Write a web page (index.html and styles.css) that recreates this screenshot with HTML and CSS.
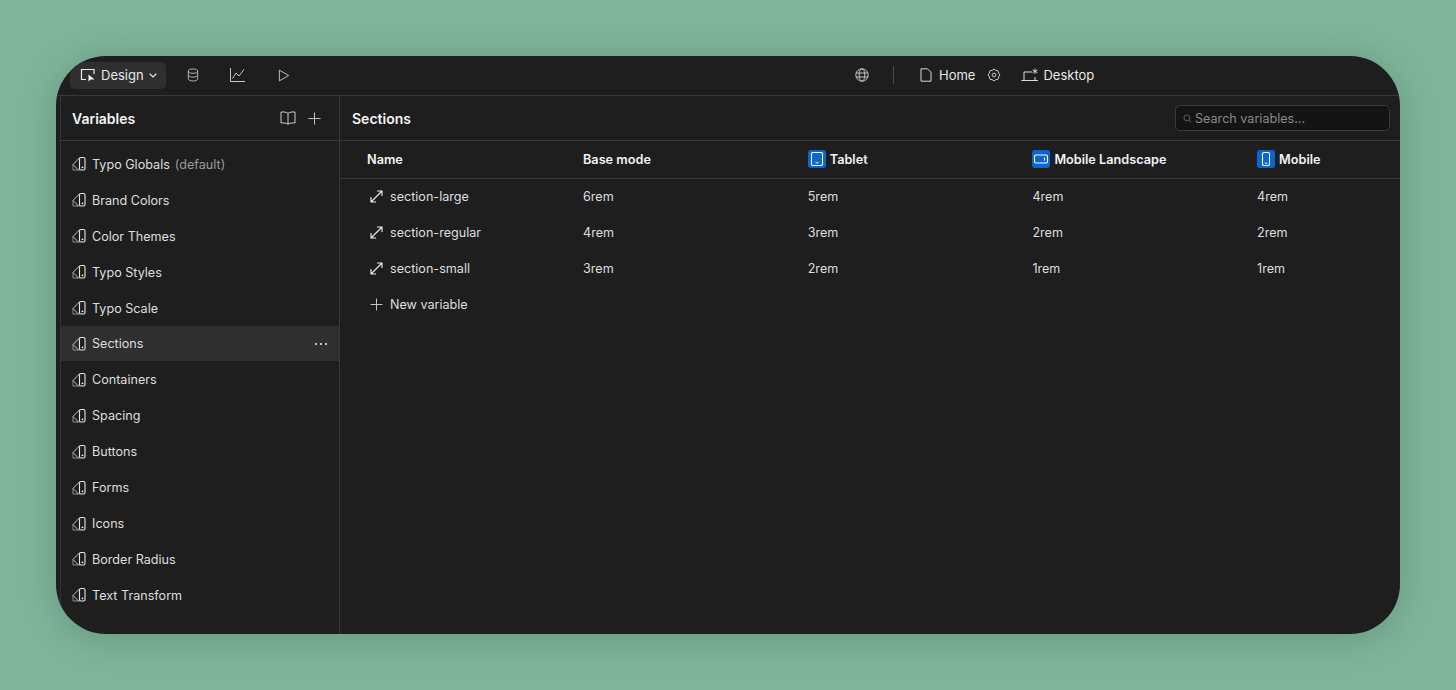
FILE: index.html
```html
<!DOCTYPE html>
<html lang="en">
<head>
<meta charset="utf-8">
<title>Variables</title>
<link rel="stylesheet" href="styles.css">
</head>
<body>
<svg class="defs" width="0" height="0" aria-hidden="true">
  <symbol id="coll" viewBox="0 0 16 16">
    <path d="M1 8.500V14H8" fill="none" stroke="#8c8c8c" stroke-width="1"/>
    <path d="M1 8.500 7.500 1.800M1 8.500 6.500 14" fill="none" stroke="#c4c4c4" stroke-width="1"/>
    <rect x="7.500" y="1.500" width="5.500" height="12.500" rx="1.500" fill="#1e1e1e" stroke="#e6e6e6" stroke-width="1.100"/>
    <circle cx="10.500" cy="11.300" r=".9" fill="#f4f4f4"/>
  </symbol>
  <symbol id="resize" viewBox="0 0 13 13">
    <path d="M1.500 11.500 11.500 1.500M7 1H12V6M1 7V12H6" fill="none" stroke="#f0f0f0" stroke-width="1.100"/>
  </symbol>
  <symbol id="plus" viewBox="0 0 14 14">
    <path d="M7 .5V13.500M.5 7H13.500" fill="none" stroke="currentColor" stroke-width="1"/>
  </symbol>
</svg>
<main class="app">
  <header class="topbar">
    <div class="top-left">
      <button class="mode">
        <svg class="ic16" viewBox="0 0 16 16"><path d="M6 12.500H1.500V2.500H14V7" fill="none" stroke="#eee" stroke-width="1.200"/><path d="M8.500 7.500V14.500L10.500 12.600H14.500Z" fill="#fff"/></svg>
        <span>Design</span>
        <svg class="chev" viewBox="0 0 8 5"><path d="M.7.800 4 4 7.300.800" fill="none" stroke="#e4e4e4" stroke-width="1.200"/></svg>
      </button>
      <svg class="tool db" viewBox="0 0 14 16"><ellipse cx="7" cy="3.500" rx="5.500" ry="2.500" fill="none" stroke="#c8c8c8"/><path d="M1.500 3.500V12.500C1.500 14 4 15 7 15S12.500 14 12.500 12.500V3.500M1.500 8C1.500 9.500 4 10.500 7 10.500S12.500 9.500 12.500 8" fill="none" stroke="#c8c8c8"/></svg>
      <svg class="tool chart" viewBox="0 0 15 14"><path d="M.5 0V13.500H15M2.500 10.500 6 5 9 8 14 1.500" fill="none" stroke="#c8c8c8"/></svg>
      <svg class="tool play" viewBox="0 0 12 14"><path d="M1 1.200V12.800L11 7Z" fill="none" stroke="#c8c8c8" stroke-linejoin="round"/></svg>
    </div>
    <div class="top-center">
      <svg class="globe" viewBox="0 0 14 14"><circle cx="7" cy="7" r="6.200" fill="none" stroke="#c8c8c8"/><ellipse cx="7" cy="7" rx="2.800" ry="6.200" fill="none" stroke="#c8c8c8"/><path d="M1 5H13M1 9H13" stroke="#c8c8c8" fill="none"/></svg>
      <span class="vsep"></span>
      <svg class="page" viewBox="0 0 12 14"><path d="M1 .800H7.500L11 4.300V13.200H1Z" fill="none" stroke="#d8d8d8"/></svg>
      <span class="top-text home">Home</span>
      <svg class="gear" viewBox="0 0 14 14"><path d="M8.800 2.660A1.850 1.850 0 0 1 11.340 5.200 1.850 1.850 0 0 1 11.340 8.800 1.850 1.850 0 0 1 8.800 11.340 1.850 1.850 0 0 1 5.200 11.340 1.850 1.850 0 0 1 2.660 8.800 1.850 1.850 0 0 1 2.660 5.200 1.850 1.850 0 0 1 5.200 2.660 1.850 1.850 0 0 1 8.800 2.660Z" fill="none" stroke="#c8c8c8"/><circle cx="7" cy="7" r="1.900" fill="none" stroke="#c8c8c8"/></svg>
      <svg class="desk" viewBox="0 0 18 14"><path d="M3 12V4H11M14 9V12M.5 12.500H17" fill="none" stroke="#ddd"/><path d="M14 .5V6M11.600 1.900 16.400 4.600M16.400 1.900 11.600 4.600" fill="none" stroke="#ddd" stroke-width=".9"/></svg>
      <span class="top-text">Desktop</span>
    </div>
  </header>
  <div class="body">
    <aside class="sidebar">
      <div class="side-head">
        <h2>Variables</h2>
        <svg class="book" viewBox="0 0 16 14"><path d="M8 2.500C6.500 1.200 4 .8 1 1V12C4 11.800 6.500 12 8 13.300 9.500 12 12 11.800 15 12V1C12 .8 9.500 1.200 8 2.500ZM8 2.500V13.300" fill="none" stroke="#cfcfcf"/></svg>
        <svg class="add"><use href="#plus"/></svg>
      </div>
      <ul class="list">
        <li><svg class="coll"><use href="#coll"/></svg>Typo Globals<span class="muted">(default)</span></li>
        <li><svg class="coll"><use href="#coll"/></svg>Brand Colors</li>
        <li><svg class="coll"><use href="#coll"/></svg>Color Themes</li>
        <li><svg class="coll"><use href="#coll"/></svg>Typo Styles</li>
        <li><svg class="coll"><use href="#coll"/></svg>Typo Scale</li>
        <li class="active"><svg class="coll"><use href="#coll"/></svg>Sections<span class="dots"><i></i><i></i><i></i></span></li>
        <li><svg class="coll"><use href="#coll"/></svg>Containers</li>
        <li><svg class="coll"><use href="#coll"/></svg>Spacing</li>
        <li><svg class="coll"><use href="#coll"/></svg>Buttons</li>
        <li><svg class="coll"><use href="#coll"/></svg>Forms</li>
        <li><svg class="coll"><use href="#coll"/></svg>Icons</li>
        <li><svg class="coll"><use href="#coll"/></svg>Border Radius</li>
        <li><svg class="coll"><use href="#coll"/></svg>Text Transform</li>
      </ul>
    </aside>
    <section class="content">
      <div class="content-head">
        <h2>Sections</h2>
        <label class="search">
          <svg class="lens" viewBox="0 0 10 10"><circle cx="4.300" cy="4.300" r="3.300" fill="none" stroke="#666"/><path d="M6.800 6.800 9.300 9.300" stroke="#666" fill="none"/></svg>
          <span>Search variables...</span>
        </label>
      </div>
      <div class="grid head">
        <div class="name-h">Name</div>
        <div>Base mode</div>
        <div class="bp"><span class="badge"><svg viewBox="0 0 18 18"><rect x="3.500" y="2.500" width="11" height="13" rx="1.200" fill="none" stroke="#fff" stroke-width="1.100"/><path d="M7.500 12.800H10.500" stroke="#fff"/></svg></span>Tablet</div>
        <div class="bp"><span class="badge"><svg viewBox="0 0 18 18"><rect x="2.500" y="5" width="13" height="8" rx="1.500" fill="none" stroke="#fff" stroke-width="1.100"/><path d="M12.500 7.500V10.500" stroke="#fff"/></svg></span>Mobile Landscape</div>
        <div class="bp"><span class="badge"><svg viewBox="0 0 18 18"><rect x="5.500" y="2.500" width="7" height="13" rx="1.500" fill="none" stroke="#fff" stroke-width="1.100"/><path d="M7.800 13.200H10.200" stroke="#fff"/></svg></span>Mobile</div>
      </div>
      <div class="grid row">
        <div class="var"><svg class="rz"><use href="#resize"/></svg>section-large</div><div>6rem</div><div>5rem</div><div>4rem</div><div>4rem</div>
      </div>
      <div class="grid row">
        <div class="var"><svg class="rz"><use href="#resize"/></svg>section-regular</div><div>4rem</div><div>3rem</div><div>2rem</div><div>2rem</div>
      </div>
      <div class="grid row">
        <div class="var"><svg class="rz"><use href="#resize"/></svg>section-small</div><div>3rem</div><div>2rem</div><div>1rem</div><div>1rem</div>
      </div>
      <div class="grid row">
        <div class="var"><svg class="rz plusic"><use href="#plus"/></svg>New variable</div>
      </div>
    </section>
  </div>
</main>
</body>
</html>
```

FILE: styles.css
```css
* { box-sizing: border-box; }
html, body { margin: 0; height: 100%; }
body {
  padding: 56px;
  height: 690px;
  overflow: hidden;
  background: #80b59b;
  font-family: Inter, "Liberation Sans", sans-serif;
  font-size: 12.6px;
  color: #e6e6e6;
}
.defs { position: absolute; }
.app {
  width: 1344px;
  height: 578px;
  background: #1e1e1e;
  border-radius: 50px;
  overflow: hidden;
  display: flex;
  flex-direction: column;
  box-shadow: 0 4px 40px rgba(30, 70, 55, .28);
}
.topbar {
  height: 40px;
  flex: none;
  display: flex;
  align-items: center;
  border-bottom: 1px solid #383838;
  padding-left: 14px;
  padding-bottom: 1px;
  font-size: 13px;
}
.top-left { display: flex; align-items: center; width: 785px; flex: none; }
.mode {
  display: flex;
  align-items: center;
  height: 27px;
  width: 96px;
  padding: 0 0 0 10px;
  border: 0;
  border-radius: 5px;
  background: #2f2f2f;
  color: #e8e8e8;
  font: inherit;
}
.ic16 { width: 16px; height: 16px; flex: none; margin-right: 5px; }
.chev { width: 8px; height: 5px; margin-left: 5px; }
.tool { flex: none; }
.db { width: 12px; height: 14px; margin-left: 21px; }
.chart { width: 15px; height: 14px; margin-left: 31px; }
.play { width: 12px; height: 13px; margin-left: 33px; }
.top-center { display: flex; align-items: center; }
.globe { width: 14px; height: 14px; }
.vsep { width: 1px; height: 18px; background: #4a4a4a; margin: 0 26px 0 24px; }
.page { width: 12px; height: 14px; margin-right: 7px; }
.top-text { color: #e8e8e8; }
.gear { width: 14px; height: 14px; margin: 0 20px 0 12px; }
.desk { width: 18px; height: 14px; margin-right: 4px; }

.body { flex: 1; display: flex; min-height: 0; }
.sidebar {
  flex: none;
  margin-left: 4px;
  width: 280px;
  border-left: 1px solid #333;
  border-right: 1px solid #3a3a3a;
}
.side-head {
  height: 45px;
  display: flex;
  align-items: center;
  padding: 0 18px 0 11px;
  border-bottom: 1px solid #383838;
}
h2 { margin: 0; font-size: 14px; font-weight: 600; color: #f4f4f4; }
.side-head h2 { flex: 1; }
.book { width: 16px; height: 14px; }
.add { width: 13px; height: 13px; margin-left: 12px; color: #cfcfcf; }
.list { list-style: none; margin: 0; padding: 5px 0 0; }
.list li {
  height: 35.92px;
  display: flex;
  align-items: center;
  padding: 1px 11px 0 11px;
  color: #dedede;
}
.coll { width: 16px; height: 16px; margin-right: 4px; flex: none; }
.muted { color: #9a9a9a; margin-left: 5px; }
.active { background: #2f2f2f; }
.dots { margin-left: auto; display: flex; gap: 2px; }
.dots i { width: 2px; height: 2px; border-radius: 50%; background: #f2f2f2; margin-right: 1px; }

.content { flex: 1; min-width: 0; }
.content-head {
  height: 45px;
  display: flex;
  align-items: center;
  justify-content: space-between;
  padding: 0 10px 0 12px;
  border-bottom: 1px solid #383838;
}
.search {
  width: 215px;
  height: 26px;
  display: flex;
  align-items: center;
  gap: 3px;
  padding-left: 7px;
  background: #141414;
  border: 1px solid #3a3a3a;
  border-radius: 5px;
  color: #8a8a8a;
}
.lens { width: 9px; height: 9px; }
.grid {
  display: grid;
  grid-template-columns: 216px 224.7px 224.7px 224.7px 1fr;
  padding-left: 27px;
  align-items: center;
  color: #dedede;
}
.head {
  height: 38px;
  padding-bottom: 1px;
  font-size: 12.7px;
  font-weight: 600;
  color: #f2f2f2;
  border-bottom: 1px solid #383838;
}
.row { height: 35.8px; }
.bp { display: flex; align-items: center; gap: 4px; }
.badge {
  width: 18px;
  height: 18px;
  border-radius: 3px;
  background: #0b66d0;
  display: flex;
}
.badge svg { width: 18px; height: 18px; }
.var { display: flex; align-items: center; gap: 7px; padding-left: 3px; }
.rz { width: 13px; height: 13px; flex: none; }
.plusic { color: #cfcfcf; }
```
